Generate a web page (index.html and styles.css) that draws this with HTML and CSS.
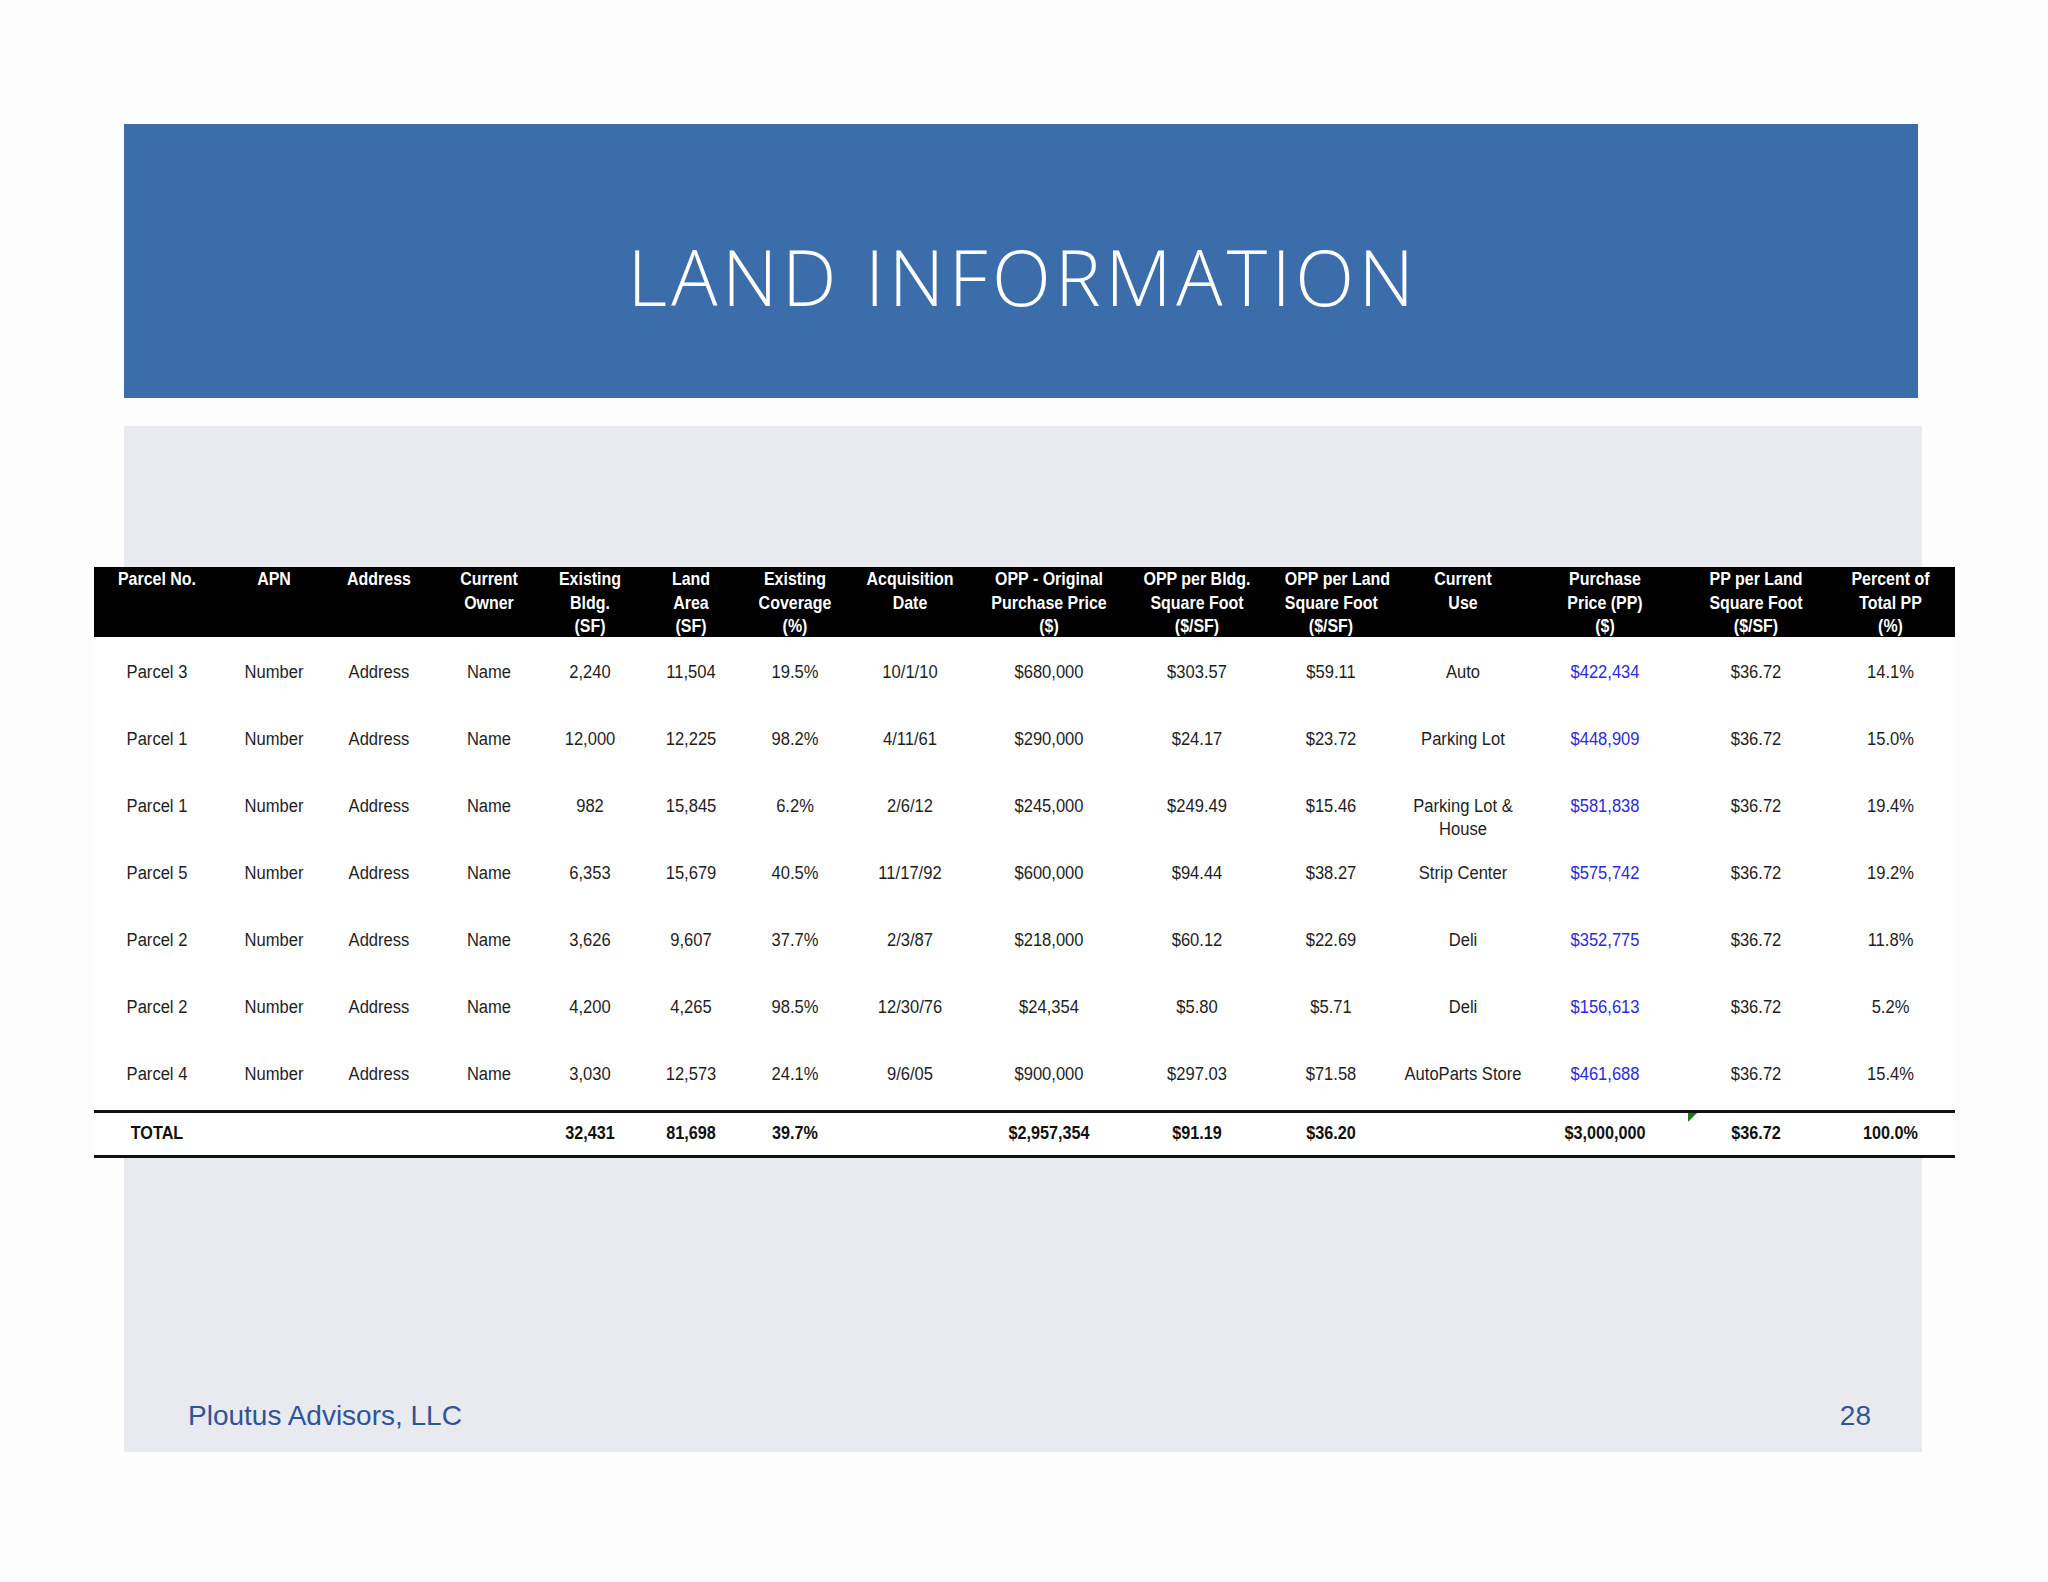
FILE: index.html
```html
<!DOCTYPE html>
<html lang="en">
<head>
<meta charset="utf-8">
<title>Land Information</title>
<link rel="stylesheet" href="styles.css">
</head>
<body>
<div class="slide">
  <header class="banner">
    <h1 class="title">LAND INFORMATION</h1>
  </header>
  <section class="panel">
    <div class="table-wrap">
      <table class="land">
        <colgroup>
          <col style="width:126px"><col style="width:108px"><col style="width:102px"><col style="width:118px"><col style="width:84px"><col style="width:118px"><col style="width:90px"><col style="width:140px"><col style="width:138px"><col style="width:158px"><col style="width:110px"><col style="width:154px"><col style="width:130px"><col style="width:172px"><col style="width:113px">
        </colgroup>
        <thead>
          <tr>
            <th><div class="hd">Parcel No.</div></th>
            <th><div class="hd">APN</div></th>
            <th><div class="hd">Address</div></th>
            <th><div class="hd">Current<br>Owner</div></th>
            <th><div class="hd">Existing<br>Bldg.<br>(SF)</div></th>
            <th><div class="hd">Land<br>Area<br>(SF)</div></th>
            <th><div class="hd">Existing<br>Coverage<br>(%)</div></th>
            <th><div class="hd">Acquisition<br>Date</div></th>
            <th><div class="hd">OPP - Original<br>Purchase Price<br>($)</div></th>
            <th><div class="hd">OPP per Bldg.<br>Square Foot<br>($/SF)</div></th>
            <th><div class="hd">OPP per Land<br>Square Foot<br>($/SF)</div></th>
            <th><div class="hd">Current<br>Use</div></th>
            <th><div class="hd">Purchase<br>Price (PP)<br>($)</div></th>
            <th><div class="hd">PP per Land<br>Square Foot<br>($/SF)</div></th>
            <th class="lastcol"><div class="hd">Percent of<br>Total PP<br>(%)</div></th>
          </tr>
        </thead>
        <tbody>
          <tr>
            <td><span class="c">Parcel 3</span></td><td><span class="c">Number</span></td><td><span class="c">Address</span></td><td><span class="c">Name</span></td><td><span class="c">2,240</span></td><td><span class="c">11,504</span></td><td><span class="c">19.5%</span></td><td><span class="c">10/1/10</span></td><td><span class="c">$680,000</span></td><td><span class="c">$303.57</span></td><td><span class="c">$59.11</span></td><td><span class="c">Auto</span></td><td class="pp"><span class="c">$422,434</span></td><td><span class="c">$36.72</span></td><td class="lastcol"><span class="c">14.1%</span></td>
          </tr>
          <tr>
            <td><span class="c">Parcel 1</span></td><td><span class="c">Number</span></td><td><span class="c">Address</span></td><td><span class="c">Name</span></td><td><span class="c">12,000</span></td><td><span class="c">12,225</span></td><td><span class="c">98.2%</span></td><td><span class="c">4/11/61</span></td><td><span class="c">$290,000</span></td><td><span class="c">$24.17</span></td><td><span class="c">$23.72</span></td><td><span class="c">Parking Lot</span></td><td class="pp"><span class="c">$448,909</span></td><td><span class="c">$36.72</span></td><td class="lastcol"><span class="c">15.0%</span></td>
          </tr>
          <tr>
            <td><span class="c">Parcel 1</span></td><td><span class="c">Number</span></td><td><span class="c">Address</span></td><td><span class="c">Name</span></td><td><span class="c">982</span></td><td><span class="c">15,845</span></td><td><span class="c">6.2%</span></td><td><span class="c">2/6/12</span></td><td><span class="c">$245,000</span></td><td><span class="c">$249.49</span></td><td><span class="c">$15.46</span></td><td><span class="c">Parking Lot &amp;<br>House</span></td><td class="pp"><span class="c">$581,838</span></td><td><span class="c">$36.72</span></td><td class="lastcol"><span class="c">19.4%</span></td>
          </tr>
          <tr>
            <td><span class="c">Parcel 5</span></td><td><span class="c">Number</span></td><td><span class="c">Address</span></td><td><span class="c">Name</span></td><td><span class="c">6,353</span></td><td><span class="c">15,679</span></td><td><span class="c">40.5%</span></td><td><span class="c">11/17/92</span></td><td><span class="c">$600,000</span></td><td><span class="c">$94.44</span></td><td><span class="c">$38.27</span></td><td><span class="c">Strip Center</span></td><td class="pp"><span class="c">$575,742</span></td><td><span class="c">$36.72</span></td><td class="lastcol"><span class="c">19.2%</span></td>
          </tr>
          <tr>
            <td><span class="c">Parcel 2</span></td><td><span class="c">Number</span></td><td><span class="c">Address</span></td><td><span class="c">Name</span></td><td><span class="c">3,626</span></td><td><span class="c">9,607</span></td><td><span class="c">37.7%</span></td><td><span class="c">2/3/87</span></td><td><span class="c">$218,000</span></td><td><span class="c">$60.12</span></td><td><span class="c">$22.69</span></td><td><span class="c">Deli</span></td><td class="pp"><span class="c">$352,775</span></td><td><span class="c">$36.72</span></td><td class="lastcol"><span class="c">11.8%</span></td>
          </tr>
          <tr>
            <td><span class="c">Parcel 2</span></td><td><span class="c">Number</span></td><td><span class="c">Address</span></td><td><span class="c">Name</span></td><td><span class="c">4,200</span></td><td><span class="c">4,265</span></td><td><span class="c">98.5%</span></td><td><span class="c">12/30/76</span></td><td><span class="c">$24,354</span></td><td><span class="c">$5.80</span></td><td><span class="c">$5.71</span></td><td><span class="c">Deli</span></td><td class="pp"><span class="c">$156,613</span></td><td><span class="c">$36.72</span></td><td class="lastcol"><span class="c">5.2%</span></td>
          </tr>
          <tr class="last">
            <td><span class="c">Parcel 4</span></td><td><span class="c">Number</span></td><td><span class="c">Address</span></td><td><span class="c">Name</span></td><td><span class="c">3,030</span></td><td><span class="c">12,573</span></td><td><span class="c">24.1%</span></td><td><span class="c">9/6/05</span></td><td><span class="c">$900,000</span></td><td><span class="c">$297.03</span></td><td><span class="c">$71.58</span></td><td><span class="c">AutoParts Store</span></td><td class="pp"><span class="c">$461,688</span></td><td><span class="c">$36.72</span></td><td class="lastcol"><span class="c">15.4%</span></td>
          </tr>
        </tbody>
        <tfoot>
          <tr>
            <td><span class="c">TOTAL</span></td><td></td><td></td><td></td><td><span class="c">32,431</span></td><td><span class="c">81,698</span></td><td><span class="c">39.7%</span></td><td></td><td><span class="c">$2,957,354</span></td><td><span class="c">$91.19</span></td><td><span class="c">$36.20</span></td><td></td><td><span class="c">$3,000,000</span></td><td class="flagged"><span class="flag"></span><span class="c">$36.72</span></td><td class="lastcol"><span class="c">100.0%</span></td>
          </tr>
        </tfoot>
      </table>
    </div>
    <footer class="footer">
      <span class="company">Ploutus Advisors, LLC</span>
      <span class="page-no">28</span>
    </footer>
  </section>
</div>
</body>
</html>
```

FILE: styles.css
```css
html, body {
  margin: 0;
  padding: 0;
  background: #fdfdfd;
}

body {
  width: 2048px;
  height: 1582px;
  overflow: hidden;
  font-family: "Liberation Sans", Arial, sans-serif;
}

.slide {
  padding: 124px 0 0 124px;
  display: flex;
  flex-direction: column;
}

.banner {
  width: 1794px;
  height: 274px;
  background: #3b6dab;
  display: flex;
  align-items: center;
  justify-content: center;
}

.title {
  margin: 0;
  padding-top: 30px;
  padding-left: 4px;
  font-family: "Open Sans", "Liberation Sans", sans-serif;
  font-weight: 300;
  font-size: 77px;
  letter-spacing: 4.4px;
  color: #ffffff;
  line-height: 1;
}

.panel {
  margin-top: 28px;
  width: 1798px;
  height: 1026px;
  background: #e9eaef;
  display: flex;
  flex-direction: column;
}

.table-wrap {
  margin: 141px 0 0 -30px;
  width: 1861px;
  background: #ffffff;
}

.land {
  width: 1861px;
  table-layout: fixed;
  border-collapse: collapse;
  font-family: "Liberation Sans", Arial, sans-serif;
  color: #1e1e1e;
}

.land th {
  background: #000000;
  color: #ffffff;
  padding: 0;
  vertical-align: top;
  font-weight: bold;
  font-size: 19px;
  text-align: center;
}

.hd {
  height: 70px;
  line-height: 23.5px;
  white-space: nowrap;
  transform: scaleX(0.84);
}

.land .lastcol {
  padding-right: 16px;
}

.land tbody tr {
  height: 67px;
}

.land tbody tr.last {
  height: 72px;
}

.land tbody td {
  padding: 24px 0 0;
  vertical-align: top;
  text-align: center;
  font-size: 18px;
  line-height: 23px;
  white-space: nowrap;
}

.land tbody td .c {
  display: block;
  height: 43px;
  transform: scaleX(0.92);
}

.land td.pp {
  color: #2b2bdc;
}

.land tfoot td {
  height: 42px;
  padding: 0;
  border-top: 3px solid #111111;
  border-bottom: 3px solid #111111;
  text-align: center;
  vertical-align: middle;
  font-weight: bold;
  font-size: 18px;
  color: #111111;
  white-space: nowrap;
}

.land tfoot td .c {
  display: block;
  transform: scaleX(0.9);
}

.land td.flagged {
  position: relative;
}

.flag {
  position: absolute;
  left: 18px;
  top: 0;
  width: 0;
  height: 0;
  border-top: 9px solid #1f7a1f;
  border-right: 9px solid transparent;
}

.footer {
  margin-top: auto;
  padding: 0 51px 19px 64px;
  display: flex;
  justify-content: space-between;
  align-items: center;
  font-size: 28px;
  line-height: 34px;
  color: #2f5597;
}
```
